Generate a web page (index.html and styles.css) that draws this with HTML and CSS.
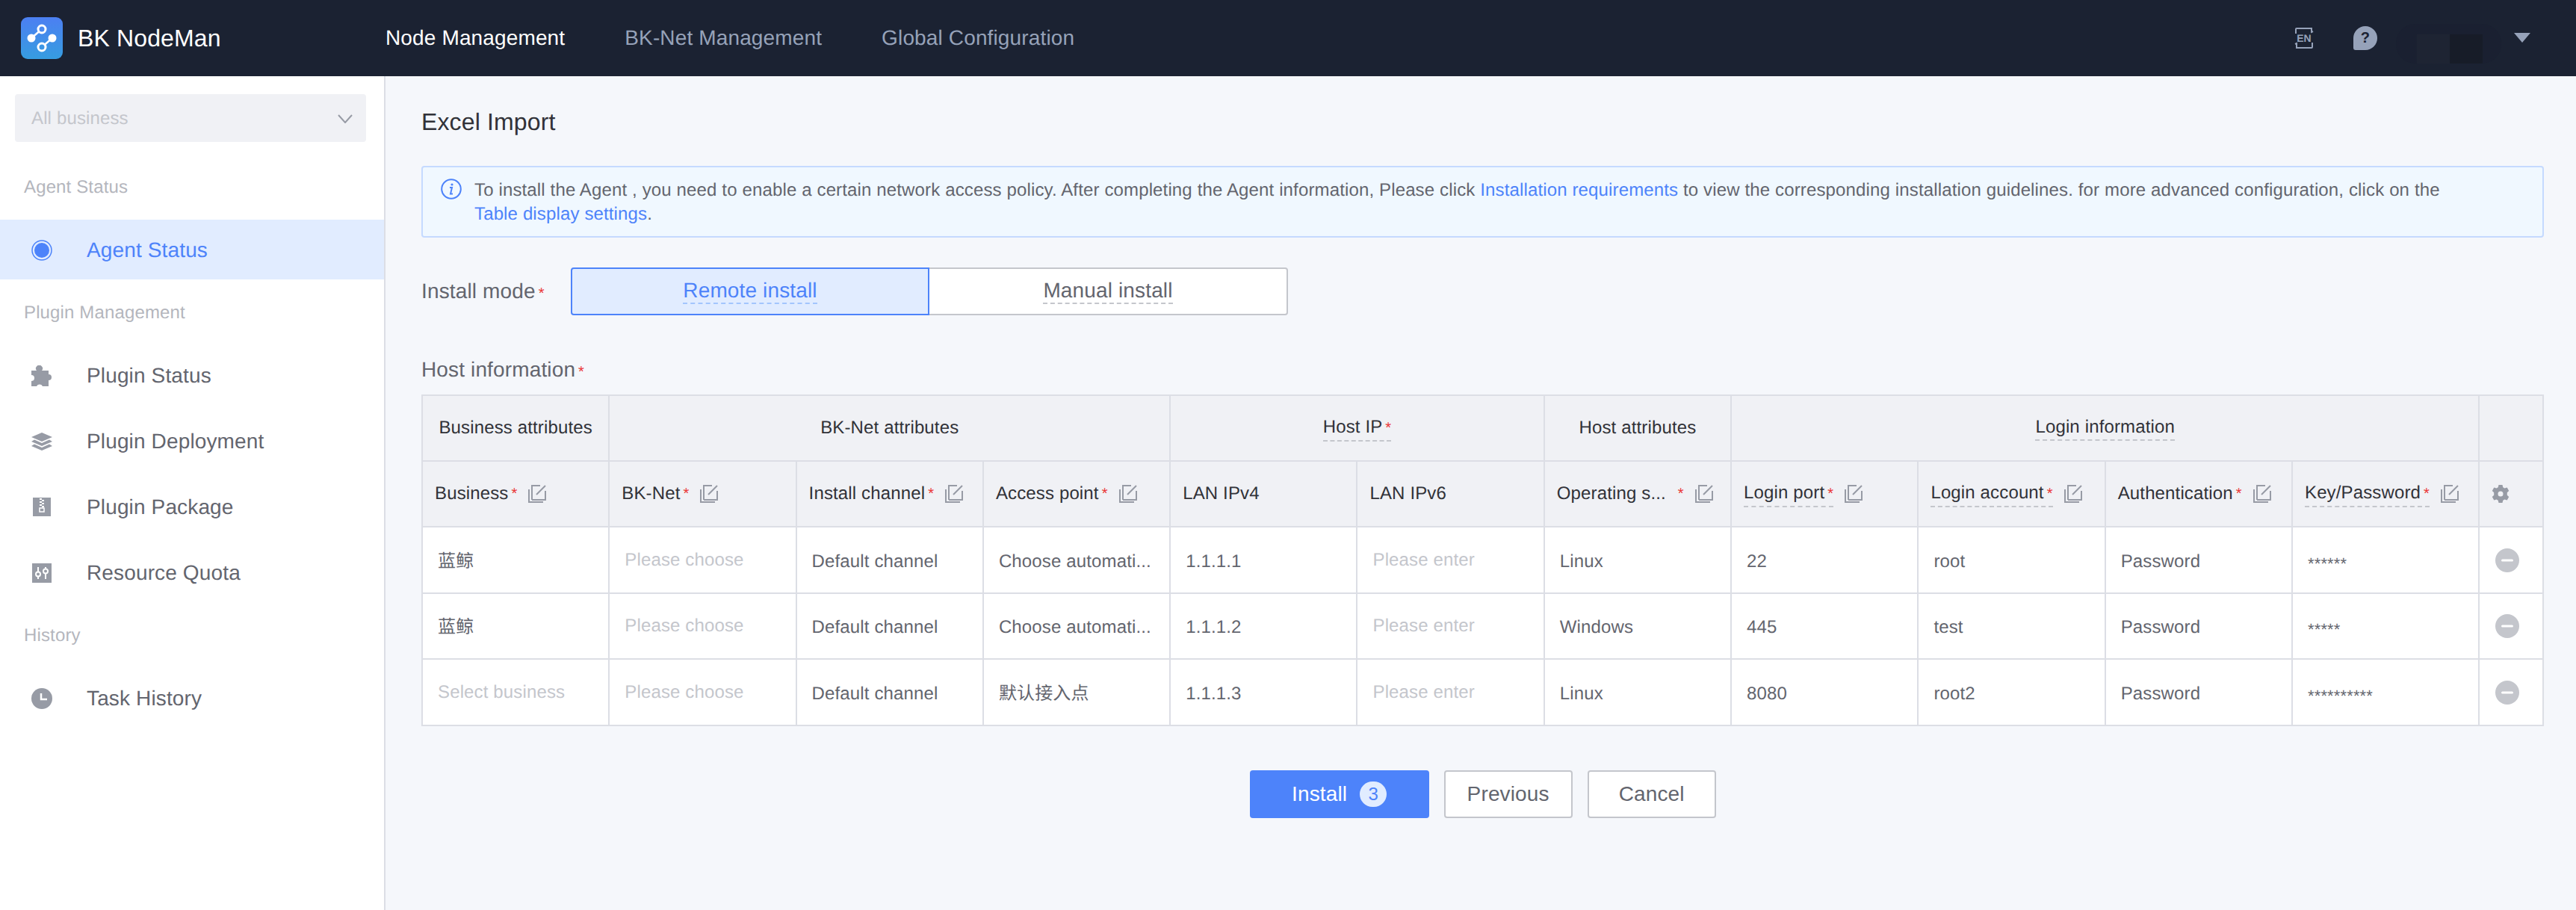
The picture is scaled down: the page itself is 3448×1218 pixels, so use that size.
FILE: index.html
```html
<!DOCTYPE html>
<html lang="en">
<head>
    <meta charset="UTF-8">
    <meta name="viewport" content="width=device-width, initial-scale=1.0">
    <title>BK NodeMan</title>
    <link rel="stylesheet" href="styles.css">
</head>
<body>
    <svg class="icon-defs" width="0" height="0">
        <symbol id="icon-batch" viewBox="0 0 24 24">
            <path d="M1 6v17h19M5 20V1h11M23 8v12H5M11 13 23 1" fill="none" stroke="currentColor" stroke-width="2"/>
        </symbol>
        <symbol id="icon-remove" viewBox="0 0 32 32">
            <circle cx="16" cy="16" r="16" fill="currentColor"/>
            <rect x="8" y="14.500" width="16" height="3" rx="1.500" fill="#fff"/>
        </symbol>
    </svg>

    <header class="topbar">
        <div class="brand">
            <svg class="brand-logo" width="56" height="56" viewBox="0 0 56 56">
                <defs>
                    <linearGradient id="logo-fill" x1="0" y1="0" x2="0" y2="1">
                        <stop offset="0" stop-color="#4c7ff2"/>
                        <stop offset="1" stop-color="#369de0"/>
                    </linearGradient>
                </defs>
                <rect width="56" height="56" rx="9" fill="url(#logo-fill)"/>
                <path d="M14 28 28 16M42 28 28 40" stroke="#fff" stroke-width="2.500"/>
                <circle cx="14" cy="28" r="5.500" fill="#fff"/>
                <circle cx="42" cy="28" r="5.500" fill="#fff"/>
                <circle cx="28" cy="16" r="5" fill="#4a8aee" stroke="#fff" stroke-width="3"/>
                <circle cx="28" cy="40" r="5" fill="#3c96e4" stroke="#fff" stroke-width="3"/>
            </svg>
            <span class="brand-name">BK NodeMan</span>
        </div>
        <nav class="topnav">
            <a class="topnav-item active">Node Management</a>
            <a class="topnav-item">BK-Net Management</a>
            <a class="topnav-item">Global Configuration</a>
        </nav>
        <div class="topbar-right">
            <svg class="lang-icon" width="28" height="30" viewBox="0 0 28 30">
                <path d="M3 9V3a1 1 0 0 1 1-1h20v5l2-1M25 21v6a1 1 0 0 1-1 1H4v-6l-2 1" fill="none" stroke="currentColor" stroke-width="2"/>
                <text x="14" y="20" text-anchor="middle" class="lang-text">EN</text>
            </svg>
            <span class="help-icon">?</span>
            <div class="user-mask">
                <span class="user-mask-a"></span>
                <span class="user-mask-b"></span>
            </div>
            <span class="user-caret"></span>
        </div>
    </header>

    <div class="layout">
        <aside class="sidebar">
            <div class="biz-select">
                <span>All business</span>
                <svg width="20" height="12" viewBox="0 0 20 12">
                    <path d="M1 1l9 10 9-10" fill="none" stroke="#979ba5" stroke-width="2"/>
                </svg>
            </div>

            <div class="side-group first">Agent Status</div>
            <a class="side-item active">
                <svg class="side-icon" width="28" height="28" viewBox="0 0 28 28">
                    <circle cx="14" cy="14" r="13" fill="none" stroke="currentColor" stroke-width="1.500"/>
                    <circle cx="14" cy="14" r="10" fill="currentColor"/>
                </svg>
                Agent Status
            </a>

            <div class="side-group">Plugin Management</div>
            <a class="side-item">
                <svg class="side-icon" width="28" height="28" viewBox="0 0 28 28">
                    <path d="M0 7h7a4.500 4.500 0 1 1 7 0h9v5a4 4 0 1 1 0 8v8h-8a4.500 4.500 0 0 0-8 0H0v-7a4 4 0 0 0 0-8z" fill="currentColor"/>
                </svg>
                Plugin Status
            </a>
            <a class="side-item">
                <svg class="side-icon" width="28" height="28" viewBox="0 0 28 28">
                    <path d="M14 2l14 6-14 6L0 8zM4 11.500 0 14l14 6 14-6-4-2.500-10 4.500zM4 17.500 0 20l14 6 14-6-4-2.500-10 4.500z" fill="currentColor"/>
                </svg>
                Plugin Deployment
            </a>
            <a class="side-item">
                <svg class="side-icon" width="28" height="28" viewBox="0 0 28 28">
                    <path d="M2 1h24v25H2z" fill="currentColor"/>
                    <path d="M11 2h3v2h-3zM14 4h3v2h-3zM11 6h3v2h-3zM14 8h3v2h-3zM11 10h3v2h-3zM14 12h3v2h-3z" fill="#fff"/>
                    <path d="M11 15h6v5h-6z" fill="none" stroke="#fff" stroke-width="1.500"/>
                </svg>
                Plugin Package
            </a>
            <a class="side-item">
                <svg class="side-icon" width="28" height="28" viewBox="0 0 28 28">
                    <path d="M1 1h26v26H1z" fill="currentColor"/>
                    <path d="M9 6v6M9 19v3M19 6v2M19 15v7" stroke="#fff" stroke-width="2"/>
                    <circle cx="9" cy="15.500" r="3" fill="none" stroke="#fff" stroke-width="2"/>
                    <circle cx="19" cy="11.500" r="3" fill="none" stroke="#fff" stroke-width="2"/>
                </svg>
                Resource Quota
            </a>

            <div class="side-group">History</div>
            <a class="side-item">
                <svg class="side-icon" width="28" height="28" viewBox="0 0 28 28">
                    <circle cx="14" cy="14" r="14" fill="currentColor"/>
                    <path d="M13 7v8h8" fill="none" stroke="#fff" stroke-width="2.500"/>
                </svg>
                Task History
            </a>
        </aside>

        <main class="content">
            <h2 class="page-title">Excel Import</h2>

            <div class="alert">
                <svg class="alert-icon" width="28" height="28" viewBox="0 0 28 28">
                    <circle cx="14" cy="14" r="12.800" fill="none" stroke="currentColor" stroke-width="2"/>
                    <circle cx="15" cy="8" r="1.600" fill="currentColor"/>
                    <path d="M12 12h3l-2 8.500h3" fill="none" stroke="currentColor" stroke-width="2"/>
                </svg>
                <p>To install the Agent , you need to enable a certain network access policy. After completing the Agent information, Please click <a class="link">Installation requirements</a> to view the corresponding installation guidelines. for more advanced configuration, click on the<br><a class="link">Table display settings</a>.</p>
            </div>

            <div class="mode-row">
                <div class="mode-label">Install mode<span class="req">*</span></div>
                <div class="mode-tabs">
                    <div class="mode-tab active"><span class="tip">Remote install</span></div>
                    <div class="mode-tab"><span class="tip">Manual install</span></div>
                </div>
            </div>

            <div class="host-label">Host information<span class="req">*</span></div>

            <table class="host-table">
                <colgroup>
                    <col class="col-data"><col class="col-data"><col class="col-data"><col class="col-data">
                    <col class="col-data"><col class="col-data"><col class="col-data"><col class="col-data">
                    <col class="col-data"><col class="col-data"><col class="col-data"><col class="col-op">
                </colgroup>
                <thead>
                    <tr>
                        <th class="group">Business attributes</th>
                        <th class="group" colspan="3">BK-Net attributes</th>
                        <th class="group" colspan="2"><span class="tip">Host IP<span class="req">*</span></span></th>
                        <th class="group">Host attributes</th>
                        <th class="group" colspan="4"><span class="tip">Login information</span></th>
                        <th class="group"></th>
                    </tr>
                    <tr>
                        <th><div class="th-cell">Business<span class="req">*</span><svg class="edit"><use href="#icon-batch"/></svg></div></th>
                        <th><div class="th-cell">BK-Net<span class="req">*</span><svg class="edit"><use href="#icon-batch"/></svg></div></th>
                        <th><div class="th-cell">Install channel<span class="req">*</span><svg class="edit"><use href="#icon-batch"/></svg></div></th>
                        <th><div class="th-cell">Access point<span class="req">*</span><svg class="edit"><use href="#icon-batch"/></svg></div></th>
                        <th><div class="th-cell">LAN IPv4</div></th>
                        <th><div class="th-cell">LAN IPv6</div></th>
                        <th><div class="th-cell">Operating s...<span class="req wide">*</span><svg class="edit"><use href="#icon-batch"/></svg></div></th>
                        <th><div class="th-cell"><span class="tip">Login port<span class="req">*</span></span><svg class="edit"><use href="#icon-batch"/></svg></div></th>
                        <th><div class="th-cell"><span class="tip">Login account<span class="req">*</span></span><svg class="edit"><use href="#icon-batch"/></svg></div></th>
                        <th><div class="th-cell">Authentication<span class="req">*</span><svg class="edit"><use href="#icon-batch"/></svg></div></th>
                        <th><div class="th-cell"><span class="tip">Key/Password<span class="req">*</span></span><svg class="edit"><use href="#icon-batch"/></svg></div></th>
                        <th class="op-head">
                            <svg width="24" height="24" viewBox="0 0 24 24">
                                <path fill-rule="evenodd" d="M9.500 0h5l.8 3.300 2.100 1.200 3.300-.9 2.500 4.300-2.400 2.400v3.400l2.400 2.400-2.500 4.300-3.300-.9-2.100 1.200-.8 3.300h-5l-.8-3.300-2.100-1.200-3.300.9-2.500-4.300 2.400-2.400v-3.400L.8 7.900l2.500-4.300 3.300.9 2.100-1.200zM12 8.500a3.500 3.500 0 1 0 0 7 3.500 3.500 0 0 0 0-7z" fill="#979ba5"/>
                            </svg>
                        </th>
                    </tr>
                </thead>
                <tbody>
                    <tr>
                        <td>蓝鲸</td>
                        <td class="ph">Please choose</td>
                        <td>Default channel</td>
                        <td>Choose automati...</td>
                        <td>1.1.1.1</td>
                        <td class="ph">Please enter</td>
                        <td>Linux</td>
                        <td>22</td>
                        <td>root</td>
                        <td>Password</td>
                        <td class="mask">******</td>
                        <td class="op"><svg class="remove"><use href="#icon-remove"/></svg></td>
                    </tr>
                    <tr>
                        <td>蓝鲸</td>
                        <td class="ph">Please choose</td>
                        <td>Default channel</td>
                        <td>Choose automati...</td>
                        <td>1.1.1.2</td>
                        <td class="ph">Please enter</td>
                        <td>Windows</td>
                        <td>445</td>
                        <td>test</td>
                        <td>Password</td>
                        <td class="mask">*****</td>
                        <td class="op"><svg class="remove"><use href="#icon-remove"/></svg></td>
                    </tr>
                    <tr>
                        <td class="ph">Select business</td>
                        <td class="ph">Please choose</td>
                        <td>Default channel</td>
                        <td>默认接入点</td>
                        <td>1.1.1.3</td>
                        <td class="ph">Please enter</td>
                        <td>Linux</td>
                        <td>8080</td>
                        <td>root2</td>
                        <td>Password</td>
                        <td class="mask">**********</td>
                        <td class="op"><svg class="remove"><use href="#icon-remove"/></svg></td>
                    </tr>
                </tbody>
            </table>

            <div class="actions">
                <button class="btn primary">Install<span class="badge">3</span></button>
                <button class="btn">Previous</button>
                <button class="btn">Cancel</button>
            </div>
        </main>
    </div>
</body>
</html>
```

FILE: styles.css
```css
* {
    box-sizing: border-box;
    margin: 0;
    padding: 0;
}

body {
    font-family: "Liberation Sans", "Noto Sans CJK SC", sans-serif;
    font-size: 24px;
    letter-spacing: 0.14px;
    color: #63656e;
    background: #f5f7fb;
    height: 100vh;
    overflow: hidden;
    text-rendering: geometricPrecision;
}

.icon-defs {
    position: absolute;
}

/* top bar */
.topbar {
    display: flex;
    align-items: center;
    height: 102px;
    padding: 0 61px 0 28px;
    background: #1b2232;
}

.brand {
    display: flex;
    align-items: center;
    width: 488px;
}

.brand-name {
    margin-left: 20px;
    font-size: 32px;
    color: #fff;
}

.topnav {
    display: flex;
    gap: 80px;
}

.topnav-item {
    font-size: 28px;
    color: #96a2b9;
}

.topnav-item.active {
    color: #fff;
}

.topbar-right {
    display: flex;
    align-items: center;
    margin-left: auto;
    color: #96a2b9;
}

.lang-text {
    font-size: 14px;
    font-weight: 700;
    fill: currentColor;
}

.help-icon {
    display: flex;
    align-items: center;
    justify-content: center;
    width: 32px;
    height: 32px;
    margin-left: 52px;
    border-radius: 50% 50% 50% 3px;
    background: #96a2b9;
    color: #1b2232;
    font-size: 20px;
    font-weight: 700;
}

.user-mask {
    display: flex;
    width: 141px;
    height: 53px;
    margin: 14px 17px 0 25px;
    padding: 14px 0 0 28px;
    border-radius: 26px;
    background: #1a2031;
}

.user-mask-a,
.user-mask-b {
    width: 44px;
    height: 39px;
}

.user-mask-a {
    background: #1e2433;
}

.user-mask-b {
    background: #171c28;
}

.user-caret {
    width: 0;
    height: 0;
    margin-top: -1px;
    border-left: 11px solid transparent;
    border-right: 11px solid transparent;
    border-top: 13px solid #96a2b9;
}

/* side menu */
.layout {
    display: flex;
    height: calc(100vh - 102px);
}

.sidebar {
    width: 516px;
    flex-shrink: 0;
    padding-top: 24px;
    background: #fff;
    border-right: 2px solid #dcdee5;
}

.biz-select {
    display: flex;
    align-items: center;
    justify-content: space-between;
    width: 470px;
    height: 64px;
    margin-left: 20px;
    padding: 2px 18px 0 22px;
    border-radius: 4px;
    background: #f0f1f5;
    color: #c4c6cc;
}

.side-group {
    height: 32px;
    margin: 28px 0;
    padding-left: 32px;
    line-height: 34px;
    color: #b4b6bd;
}

.side-group.first {
    margin-top: 44px;
}

.side-item {
    display: flex;
    align-items: center;
    height: 80px;
    margin-bottom: 8px;
    padding: 2px 0 0 42px;
    font-size: 28px;
    color: #63656e;
}

.side-item.active {
    background: #e1ecff;
    color: #4d83fa;
}

.side-icon {
    margin-right: 46px;
    color: #979ba5;
}

.side-item.active .side-icon {
    color: #4d83fa;
}

/* page */
.content {
    flex: 1;
    padding: 41px 45px 0 48px;
}

.page-title {
    font-size: 32px;
    font-weight: 400;
    line-height: 40px;
    color: #313238;
}

.alert {
    display: flex;
    height: 96px;
    margin-top: 39px;
    padding: 15px 0 0 24px;
    border: 2px solid #c5daff;
    border-radius: 4px;
    background: #f0f8ff;
    line-height: 32px;
}

.alert-icon {
    flex-shrink: 0;
    margin-right: 17px;
    color: #4d83fa;
}

.link {
    color: #4d83fa;
}

.req {
    margin-left: 4px;
    font-size: 20px;
    color: #ea3636;
}

.mode-row {
    display: flex;
    align-items: center;
    margin-top: 40px;
}

.mode-label {
    width: 200px;
    font-size: 28px;
}

.mode-tabs {
    display: flex;
}

.mode-tab {
    display: flex;
    align-items: center;
    justify-content: center;
    width: 480px;
    height: 64px;
    border: 2px solid #c4c6cc;
    border-left: none;
    border-radius: 0 4px 4px 0;
    background: #fff;
    font-size: 28px;
}

.mode-tab.active {
    border: 2px solid #4d83fa;
    border-radius: 4px 0 0 4px;
    background: #e1ecff;
    color: #4d83fa;
}

.tip {
    display: inline-block;
    border-bottom: 2px dashed #c4c6cc;
}

.mode-tab.active .tip {
    border-bottom-color: #a3c5fd;
}

.host-label {
    margin-top: 57px;
    font-size: 28px;
    line-height: 32px;
}

/* host table */
.host-table {
    width: 2839px;
    margin-top: 14px;
    border-collapse: collapse;
    table-layout: fixed;
}

.col-data {
    width: 250.300px;
}

.col-op {
    width: 86px;
}

.host-table th,
.host-table td {
    height: 88px;
    border: 2px solid #dcdee5;
    line-height: 32px;
    white-space: nowrap;
}

.host-table tbody tr:nth-child(odd) td {
    height: 89px;
}

.host-table th {
    padding: 0 16px;
    background: #f0f1f5;
    color: #313238;
    font-weight: 400;
    text-align: left;
}

.host-table th.group {
    padding: 0;
    text-align: center;
}

.th-cell {
    display: flex;
    align-items: center;
}

.req.wide {
    margin-left: 16px;
}

.edit {
    flex-shrink: 0;
    width: 24px;
    height: 24px;
    margin-left: 15px;
    color: #979ba5;
}

.host-table th.op-head {
    padding: 0 0 0 16px;
}

.op-head svg {
    display: block;
}

.host-table td {
    padding: 4px 20px 0;
    background: #fff;
}

.host-table td.ph {
    padding-top: 0;
    color: #c4c6cc;
}

.host-table td.mask {
    padding-top: 10px;
    font-size: 22px;
}

.host-table td.op {
    padding: 0 0 0 21px;
}

.remove {
    display: block;
    width: 32px;
    height: 32px;
    color: #c4c6cc;
}

.actions {
    display: flex;
    justify-content: center;
    gap: 20px;
    margin-top: 59px;
}

.btn {
    width: 172px;
    height: 64px;
    border: 2px solid #c4c6cc;
    border-radius: 4px;
    background: #fff;
    color: #63656e;
    font-family: inherit;
    font-size: 28px;
    letter-spacing: inherit;
}

.btn.primary {
    display: flex;
    align-items: center;
    justify-content: center;
    width: 240px;
    border: none;
    background: #4d83fa;
    color: #fff;
}

.badge {
    width: 36px;
    height: 34px;
    margin-left: 17px;
    border-radius: 17px;
    background: #e1ecff;
    color: #4d83fa;
    font-size: 24px;
    line-height: 34px;
}
```
